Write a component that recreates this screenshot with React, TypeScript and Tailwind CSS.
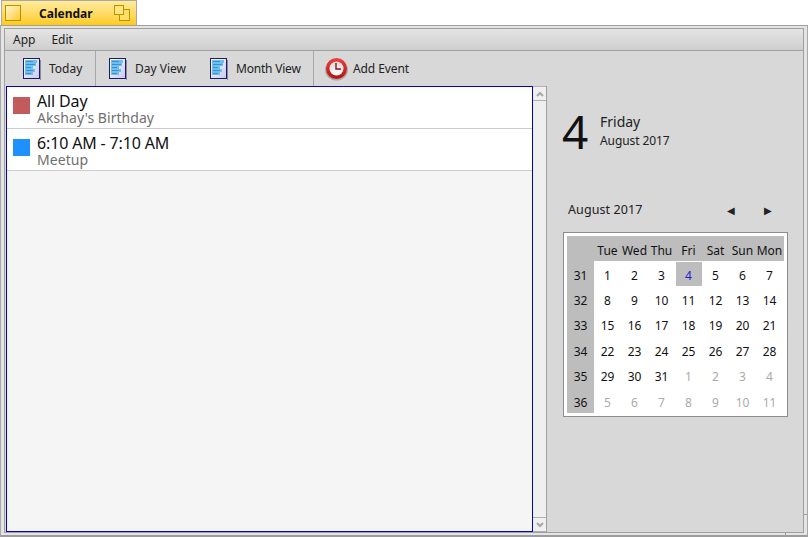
const calendarWeeks = [
  { week: 31, days: ['1', '2', '3', '4', '5', '6', '7'] },
  { week: 32, days: ['8', '9', '10', '11', '12', '13', '14'] },
  { week: 33, days: ['15', '16', '17', '18', '19', '20', '21'] },
  { week: 34, days: ['22', '23', '24', '25', '26', '27', '28'] },
  { week: 35, days: ['29', '30', '31', '1', '2', '3', '4'] },
  { week: 36, days: ['5', '6', '7', '8', '9', '10', '11'] },
]

const weekDays = ['Tue', 'Wed', 'Thu', 'Fri', 'Sat', 'Sun', 'Mon']

function DocIcon() {
  return (
    <svg width="18" height="22" viewBox="0 0 18 22" className="shrink-0">
      <defs>
        <linearGradient id="docFill" x1="0" y1="0" x2="1" y2="1">
          <stop offset="0" stopColor="#ffffff" />
          <stop offset="1" stopColor="#c8c8f0" />
        </linearGradient>
      </defs>
      <rect x="0.5" y="0.5" width="16" height="20" fill="url(#docFill)" stroke="#1c1c6a" />
      <rect x="17" y="2" width="1" height="20" fill="#8a8a9a" />
      <rect x="2" y="2" width="12" height="3" fill="#6cc0f0" />
      <rect x="2" y="5" width="11" height="3" fill="#6cc0f0" />
      <rect x="2" y="8" width="8" height="3" fill="#6cc0f0" />
      <rect x="2" y="11" width="10" height="3" fill="#6cc0f0" />
      <rect x="2" y="14" width="8" height="3" fill="#6cc0f0" />
      <rect x="3" y="3" width="7" height="1" fill="#3f8fc8" />
      <rect x="3" y="6" width="9" height="1" fill="#3f8fc8" />
      <rect x="3" y="9" width="5" height="1" fill="#3f8fc8" />
      <rect x="3" y="12" width="7" height="1" fill="#3f8fc8" />
      <rect x="3" y="15" width="5" height="1" fill="#3f8fc8" />
    </svg>
  )
}

function ClockIcon() {
  return (
    <svg width="24" height="24" viewBox="0 0 24 24" className="shrink-0">
      <defs>
        <linearGradient id="clockRim" x1="0" y1="0" x2="0" y2="1">
          <stop offset="0" stopColor="#f04040" />
          <stop offset="1" stopColor="#b81010" />
        </linearGradient>
        <linearGradient id="clockFace" x1="0" y1="0" x2="0" y2="1">
          <stop offset="0" stopColor="#d8d8d8" />
          <stop offset="1" stopColor="#ffffff" />
        </linearGradient>
      </defs>
      <ellipse cx="11.5" cy="13" rx="11.5" ry="10.5" fill="#8a8a8a" opacity="0.6" />
      <circle cx="11.5" cy="11.5" r="10.5" fill="url(#clockRim)" />
      <circle cx="11.5" cy="11.5" r="7" fill="url(#clockFace)" />
      <path d="M11 6V12H16" fill="none" stroke="#8c1414" strokeWidth="1.4" />
    </svg>
  )
}

function ToolButton({ label, clock, className, labelClass }: { label: string; clock?: boolean; className: string; labelClass?: string }) {
  return (
    <div className={`flex h-full items-center ${className}`}>
      {clock ? <ClockIcon /> : <DocIcon />}
      <span className={`text-[12px] text-[#222] ${labelClass ?? ''}`}>{label}</span>
    </div>
  )
}

function EventRow({ color, time, title }: { color: string; time: string; title: string }) {
  return (
    <div className="flex h-[42px] items-start border-b border-[#cccccc] bg-white pl-[6px]">
      <div className="mt-[10px] h-[17px] w-[17px] shrink-0" style={{ backgroundColor: color }} />
      <div className="mt-[5px] ml-[7px] flex flex-col">
        <span className="text-[16px] leading-[18px] tracking-[-0.15px] text-[#111]">{time}</span>
        <span className="text-[14px] leading-[16px] tracking-[0.05px] text-[#707070]">{title}</span>
      </div>
    </div>
  )
}

function MiniCalendar() {
  return (
    <div className="ml-[16px] w-[225px] border border-[#8c8c8c] bg-white p-[3px]">
      <div className="grid grid-cols-[27px_repeat(6,27px)_27px_1px] text-[12px] text-[#111]">
        <div className="h-[25px] bg-[#bdbdbd]" />
        {weekDays.map((d) => (
          <div key={d} className="flex h-[25px] items-center justify-center whitespace-nowrap bg-[#bdbdbd] pt-[4px]">
            {d}
          </div>
        ))}
        <div className="h-[25px] bg-[#bdbdbd]" />
        {calendarWeeks.map((row, rowIndex) => (
          <div key={row.week} className="contents">
            <div className="flex h-[25.4px] items-center justify-center bg-[#bdbdbd] pt-[4px]">{row.week}</div>
            {row.days.map((day, i) => {
              const outside = rowIndex === 5 || (rowIndex === 4 && i > 2)
              const today = rowIndex === 0 && i === 3
              return (
                <div
                  key={i}
                  className={`flex items-center justify-center ${
                    today
                      ? 'mt-px ml-px h-[24.4px] bg-[#bdbdbd] pt-[3px] pr-px text-[#2222cc]'
                      : outside
                        ? 'h-[25.4px] pt-[4px] text-[#aaaaaa]'
                        : 'h-[25.4px] pt-[4px] text-[#111]'
                  }`}
                >
                  {day}
                </div>
              )
            })}
            <div />
          </div>
        ))}
      </div>
    </div>
  )
}

export default function App() {
  return (
    <div className="flex h-[537px] w-[808px] flex-col overflow-hidden bg-white font-['Noto_Sans',sans-serif]">
      {/* Window tab */}
      <div className="ml-px flex h-[25px] w-[136px] items-center border-t border-r border-l border-[#a8a8a8] bg-gradient-to-b from-[#ffeb9a] to-[#ffcb00] pl-[3px]">
        <div className="h-[16px] w-[16px] border border-[#b89200] bg-gradient-to-br from-[#fff6c8] to-[#ffcb00]" />
        <span className="ml-[18px] pt-[2px] text-[12px] font-bold text-[#111]">Calendar</span>
        <svg width="17" height="16" viewBox="0 0 17 16" className="ml-[21px]">
          <rect x="5.5" y="4.5" width="10" height="11" fill="#ffdf66" stroke="#b89200" />
          <rect x="0.5" y="0.5" width="9" height="9" fill="#ffe680" stroke="#b89200" />
        </svg>
      </div>

      {/* Window frame */}
      <div className="relative flex flex-1 flex-col border-t border-r border-l border-b-2 border-t-[#a0a0a0] border-r-[#a8a8a8] border-l-[#a8a8a8] border-b-[#9c9c9c] bg-[#e4e4e4] px-[3px] pt-[2px] pb-[2px]">
        <div className="flex flex-1 flex-col border border-[#a0a0a0] bg-[#d8d8d8]">
          {/* Menu bar */}
          <div className="flex h-[22px] items-center gap-[16px] border-b border-[#a0a0a0] bg-gradient-to-b from-[#e4e4e4] to-[#cfcfcf] pl-[8px] text-[12px] text-[#222]">
            <span>App</span>
            <span>Edit</span>
          </div>

          {/* Toolbar */}
          <div className="flex h-[35px] items-center">
            <ToolButton label="Today" className="w-[91px] gap-[8px] border-r border-[#a8a8a8] pl-[18px]" />
            <ToolButton label="Day View" className="w-[101px] gap-[8px] pl-[13px]" />
            <ToolButton
              label="Month View"
              labelClass="tracking-[-0.2px]"
              className="w-[117px] gap-[8px] border-r border-[#a8a8a8] pl-[13px]"
            />
            <ToolButton label="Add Event" clock labelClass="tracking-[-0.1px]" className="gap-[4px] pl-[11px]" />
          </div>

          {/* Content */}
          <div className="flex flex-1">
            {/* Event list */}
            <div className="ml-px flex w-[527px] flex-col border border-[#0000e0] bg-[#f5f5f5]">
              <EventRow color="#c25b5b" time="All Day" title="Akshay's Birthday" />
              <EventRow color="#1e90ff" time="6:10 AM - 7:10 AM" title="Meetup" />
            </div>

            {/* Scrollbar */}
            <div className="flex w-[14px] flex-col justify-between border-r border-[#a0a0a0] bg-[#efefef]">
              <div className="flex h-[15px] items-center justify-center border-t border-b border-[#b0b0b0] bg-[#f0f0f0]">
                <svg width="8" height="6" viewBox="0 0 8 6">
                  <path d="M1 5L4 2L7 5" fill="none" stroke="#a8a8a8" strokeWidth="2" />
                </svg>
              </div>
              <div className="flex h-[15px] items-center justify-center border-t border-b border-[#b0b0b0] bg-[#f0f0f0]">
                <svg width="8" height="6" viewBox="0 0 8 6">
                  <path d="M1 1L4 4L7 1" fill="none" stroke="#a8a8a8" strokeWidth="2" />
                </svg>
              </div>
            </div>

            {/* Date panel */}
            <div className="flex flex-1 flex-col">
              <div className="mt-[15px] flex h-[60px] items-center pl-[15px]">
                <span className="w-[38px] text-[46px] leading-none font-normal text-[#111]">4</span>
                <div className="mb-[2px] flex flex-col">
                  <span className="text-[14px] leading-[20px] text-[#222]">Friday</span>
                  <span className="text-[12px] leading-[17px] tracking-[-0.1px] text-[#222]">August 2017</span>
                </div>
              </div>
              <div className="mt-[39px] flex h-[20px] items-center pl-[21px] text-[12.5px] tracking-[0.1px] text-[#222]">
                <span className="w-[159px]">August 2017</span>
                <span className="w-[37px] text-[10px]">◀</span>
                <span className="text-[10px]">▶</span>
              </div>
              <div className="mt-[12px]">
                <MiniCalendar />
              </div>
            </div>
          </div>
        </div>

        {/* Resize corner ticks */}
        <div className="absolute right-[-1px] bottom-[20px] h-px w-[4px] bg-[#a0a0a0]" />
        <div className="absolute right-[21px] bottom-0 h-[2px] w-px bg-[#a0a0a0]" />
      </div>
    </div>
  )
}
